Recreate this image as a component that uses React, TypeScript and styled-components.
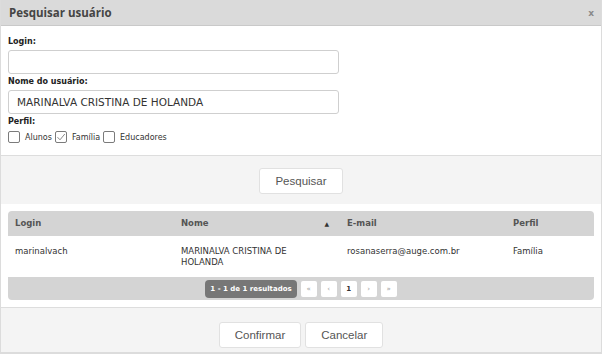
import React from 'react'
import styled, { createGlobalStyle } from 'styled-components'

const GlobalStyle = createGlobalStyle`
  html, body {
    margin: 0;
    padding: 0;
    background: #ffffff;
  }
  * {
    box-sizing: border-box;
  }
`

interface Usuario {
  login: string
  nome: string
  email: string
  perfil: string
}

const usuarios: Usuario[] = [
  {
    login: 'marinalvach',
    nome: 'MARINALVA CRISTINA DE HOLANDA',
    email: 'rosanaserra@auge.com.br',
    perfil: 'Família',
  },
]

const perfis = [
  { label: 'Alunos', checked: false },
  { label: 'Família', checked: true },
  { label: 'Educadores', checked: false },
]

const Dialog = styled.div`
  width: 602px;
  height: 354px;
  border: 1px solid #dcdcdc;
  border-top: none;
  display: flex;
  flex-direction: column;
  font-family: 'DejaVu Sans', Verdana, sans-serif;
  background: #fff;
`

const Header = styled.div`
  height: 26px;
  flex: none;
  background: #dadada;
  border-bottom: 1px solid #c9c9c9;
  display: flex;
  align-items: center;
  justify-content: space-between;
  padding: 0 7px 0 8px;
`

const Title = styled.h1`
  margin: 0;
  font-family: 'Open Sans', sans-serif;
  font-size: 11.5px;
  font-weight: 700;
  color: #454545;
`

const Close = styled.span`
  font-family: 'DejaVu Sans', sans-serif;
  font-size: 9px;
  font-weight: 700;
  color: #8a8a8a;
`

const Form = styled.div`
  padding: 10px 7px 12px;
  border-bottom: 1px solid #dddddd;
  display: flex;
  flex-direction: column;
`

const Label = styled.label<{ $first?: boolean }>`
  display: block;
  height: 12px;
  line-height: 12px;
  margin-top: ${(p) => (p.$first ? 0 : 2)}px;
  margin-bottom: 2px;
  font-size: 8px;
  font-weight: 700;
  color: #222;
`

const Input = styled.input`
  width: 331px;
  height: 24px;
  border: 1px solid #cfcfcf;
  border-radius: 3px;
  padding: 0 8px;
  font-family: 'DejaVu Sans', Verdana, sans-serif;
  font-size: 10.5px;
  color: #333;
  outline: none;
  background: #fff;
`

const CheckRow = styled.div`
  display: flex;
  align-items: center;
  height: 12px;
  margin-top: 1px;
`

const Box = styled.span`
  width: 12px;
  height: 12px;
  border: 1px solid #7b7b7b;
  border-radius: 2px;
  background: #fff;
  display: flex;
  align-items: center;
  justify-content: center;
  margin-right: 5px;
`

const CheckText = styled.span`
  font-size: 8px;
  color: #333;
  margin-right: 3px;
`

const SearchBar = styled.div`
  background: #f4f4f4;
  height: 48px;
  padding-top: 12px;
  display: flex;
  justify-content: center;
  align-items: flex-start;
`

const Button = styled.button`
  height: 26px;
  padding: 0 15px;
  border: 1px solid #e1e1e1;
  border-radius: 3px;
  background: #ffffff;
  font-family: 'Liberation Sans', Arial, sans-serif;
  font-size: 11.5px;
  color: #555;
  cursor: pointer;
`

const Results = styled.div`
  padding: 7px 7px 7px;
  border-bottom: 1px solid #dddddd;
`

const Row = styled.div<{ $head?: boolean }>`
  display: grid;
  grid-template-columns: 166px 166px 166px 1fr;
  height: ${(p) => (p.$head ? 25 : 41)}px;
  background: ${(p) => (p.$head ? '#d4d4d4' : '#ffffff')};
  border-radius: ${(p) => (p.$head ? '4px 4px 0 0' : '0')};
  align-items: ${(p) => (p.$head ? 'center' : 'start')};
  font-size: 8.5px;
  font-weight: ${(p) => (p.$head ? 700 : 400)};
  color: ${(p) => (p.$head ? '#555' : '#333')};
`

const Cell = styled.div<{ $head?: boolean }>`
  padding: ${(p) => (p.$head ? '0 11px 0 7px' : '10px 20px 0 7px')};
  line-height: 11px;
  display: flex;
  justify-content: space-between;
  align-items: center;
`

const SortArrow = styled.span`
  font-size: 6px;
  color: #333;
`

const Pager = styled.div`
  height: 23px;
  background: #d4d4d4;
  border-radius: 0 0 4px 4px;
  display: flex;
  align-items: center;
  justify-content: center;
  gap: 4px;
`

const Badge = styled.span`
  height: 18px;
  padding: 0 5px;
  border-radius: 4px;
  background: #777;
  color: #fff;
  font-size: 7px;
  font-weight: 700;
  display: flex;
  align-items: center;
`

const PageButton = styled.span<{ $active?: boolean }>`
  width: 16px;
  height: 16px;
  border-radius: 2px;
  background: #fff;
  display: flex;
  align-items: center;
  justify-content: center;
  font-size: 7px;
  font-weight: ${(p) => (p.$active ? 700 : 400)};
  color: ${(p) => (p.$active ? '#333' : '#9a9a9a')};
`

const Footer = styled.div`
  flex: 1;
  background: #f4f4f4;
  border-bottom: 1px solid #dcdcdc;
  padding-top: 14px;
  display: flex;
  justify-content: center;
  align-items: flex-start;
  gap: 4px;
`

const CheckMark = () => (
  <svg width="10" height="10" viewBox="0 0 10 10">
    <path d="M1.5 5.2 L4 7.8 L8.8 2" fill="none" stroke="#8a8a8a" strokeWidth="1" />
  </svg>
)

const App: React.FC = () => {
  return (
    <>
      <GlobalStyle />
      <Dialog>
        <Header>
          <Title>Pesquisar usuário</Title>
          <Close>x</Close>
        </Header>
        <Form>
          <Label $first>Login:</Label>
          <Input defaultValue="" />
          <Label>Nome do usuário:</Label>
          <Input defaultValue="MARINALVA CRISTINA DE HOLANDA" />
          <Label>Perfil:</Label>
          <CheckRow>
            {perfis.map((p) => (
              <React.Fragment key={p.label}>
                <Box>{p.checked && <CheckMark />}</Box>
                <CheckText>{p.label}</CheckText>
              </React.Fragment>
            ))}
          </CheckRow>
        </Form>
        <SearchBar>
          <Button>Pesquisar</Button>
        </SearchBar>
        <Results>
          <Row $head>
            <Cell $head>Login</Cell>
            <Cell $head>
              Nome <SortArrow>▲</SortArrow>
            </Cell>
            <Cell $head>E-mail</Cell>
            <Cell $head>Perfil</Cell>
          </Row>
          {usuarios.map((u) => (
            <Row key={u.login}>
              <Cell>{u.login}</Cell>
              <Cell>{u.nome}</Cell>
              <Cell>{u.email}</Cell>
              <Cell>{u.perfil}</Cell>
            </Row>
          ))}
          <Pager>
            <Badge>1 - 1 de 1 resultados</Badge>
            <PageButton>«</PageButton>
            <PageButton>‹</PageButton>
            <PageButton $active>1</PageButton>
            <PageButton>›</PageButton>
            <PageButton>»</PageButton>
          </Pager>
        </Results>
        <Footer>
          <Button>Confirmar</Button>
          <Button>Cancelar</Button>
        </Footer>
      </Dialog>
    </>
  )
}

export default App
